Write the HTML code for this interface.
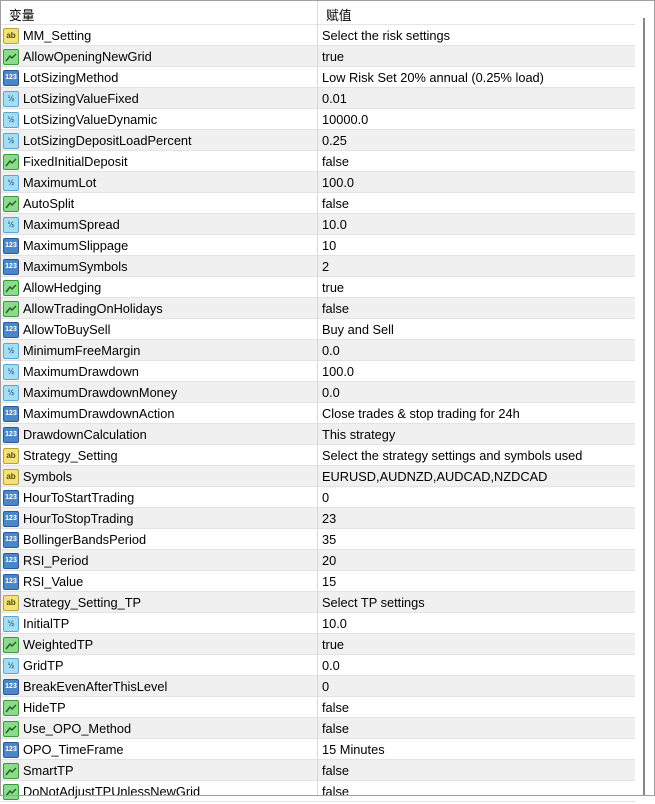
<!DOCTYPE html>
<html><head><meta charset="utf-8"><style>
*{margin:0;padding:0;box-sizing:border-box}
body{width:655px;height:796px;overflow:hidden;background:#fff;font-family:"Liberation Sans","Noto Sans CJK SC",sans-serif;font-size:12.8px;color:#000;position:relative}
.frame{position:absolute;left:0;top:0;width:655px;height:796px;border:1px solid #a0a0a0}
.hdr{position:absolute;left:1px;top:1px;width:634px;height:24px;border-bottom:1px solid #e5e5e5}
.hdr span{position:absolute;top:4px}
.row{position:absolute;left:1px;width:634px;height:21px;border-bottom:1px solid #e3e3e3}
.row.g{background:#f0f0f0}
.row .n{position:absolute;left:22px;top:3px;white-space:nowrap}
.row .v{position:absolute;left:321px;top:3px;white-space:nowrap}
.col{position:absolute;left:317px;top:1px;width:1px;height:794px;background:#d8d8d8}
.ic{position:absolute;left:2px;top:3px;width:16px;height:16px;border-radius:2px;font-size:8px;line-height:14px;text-align:center;font-weight:bold}
.ab{background:#f3e27a;border:1px solid #b8a23a;color:#5a4a00}
.bo{background:#8fd88f;border:1px solid #3a9a3a}
.in{background:#4a86c8;border:1px solid #2a5a9a;color:#fff;font-size:7px}
.db{background:#a8dcf0;border:1px solid #5aa8d0;color:#1a6a9a;font-size:8px}
.sb{position:absolute;left:643px;top:18px;width:2px;height:777px;background:#888}
</style></head><body>
<div class="hdr"><span style="left:8px">变量</span><span style="left:325px">赋值</span></div>
<div id="rows"></div>
<div class="col"></div>
<div class="sb"></div>
<div class="frame"></div>
<script>
var d=[["ab","MM_Setting","Select the risk settings"],["bo","AllowOpeningNewGrid","true"],["in","LotSizingMethod","Low Risk Set 20% annual (0.25% load)"],["db","LotSizingValueFixed","0.01"],["db","LotSizingValueDynamic","10000.0"],["db","LotSizingDepositLoadPercent","0.25"],["bo","FixedInitialDeposit","false"],["db","MaximumLot","100.0"],["bo","AutoSplit","false"],["db","MaximumSpread","10.0"],["in","MaximumSlippage","10"],["in","MaximumSymbols","2"],["bo","AllowHedging","true"],["bo","AllowTradingOnHolidays","false"],["in","AllowToBuySell","Buy and Sell"],["db","MinimumFreeMargin","0.0"],["db","MaximumDrawdown","100.0"],["db","MaximumDrawdownMoney","0.0"],["in","MaximumDrawdownAction","Close trades & stop trading for 24h"],["in","DrawdownCalculation","This strategy"],["ab","Strategy_Setting","Select the strategy settings and symbols used"],["ab","Symbols","EURUSD,AUDNZD,AUDCAD,NZDCAD"],["in","HourToStartTrading","0"],["in","HourToStopTrading","23"],["in","BollingerBandsPeriod","35"],["in","RSI_Period","20"],["in","RSI_Value","15"],["ab","Strategy_Setting_TP","Select TP settings"],["db","InitialTP","10.0"],["bo","WeightedTP","true"],["db","GridTP","0.0"],["in","BreakEvenAfterThisLevel","0"],["bo","HideTP","false"],["bo","Use_OPO_Method","false"],["in","OPO_TimeFrame","15 Minutes"],["bo","SmartTP","false"],["bo","DoNotAdjustTPUnlessNewGrid","false"]];
var t={ab:"ab",bo:"<svg width='14' height='14' viewBox='0 0 14 14'><path d='M2 11 L6 6 L8 8 L12 4' stroke='#1a6a1a' stroke-width='1.5' fill='none'/></svg>",in:"123",db:"½"};
var h="";d.forEach(function(r,i){h+='<div class="row'+(i%2?' g':'')+'" style="top:'+(25+i*21)+'px"><div class="ic '+r[0]+'">'+t[r[0]]+'</div><span class="n">'+r[1]+'</span><span class="v">'+r[2].replace(/&/g,'&amp;')+'</span></div>';});
document.getElementById('rows').innerHTML=h;
</script>
</body></html>
